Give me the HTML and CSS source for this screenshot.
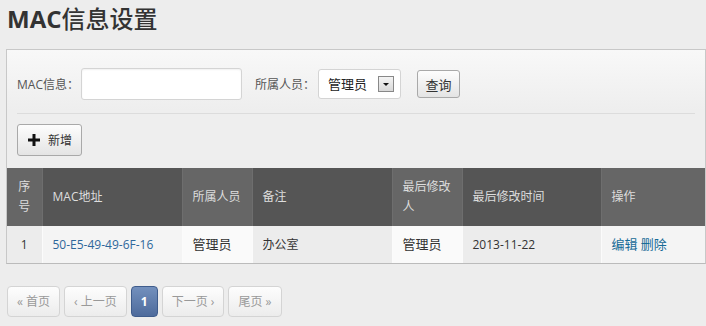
FILE: index.html
```html
<!DOCTYPE html>
<html lang="zh-CN">
<head>
  <meta charset="UTF-8" />
  <title>MAC信息设置</title>
  <link rel="stylesheet" href="styles.css">
</head>
<body>
  <h1>MAC<span class="title-cn">信息设置</span></h1>

  <div class="panel">
    <div class="filter-row">
      <label>MAC信息：</label>
      <input type="text" class="text-input" />
      <label class="gap-left">所属人员：</label>
      <div class="select">
        <span>管理员</span>
        <span class="select-arrow"><i></i></span>
      </div>
      <button class="btn btn-query">查询</button>
    </div>
    <div class="divider"></div>
    <div class="action-row">
      <button class="btn btn-add">
        <svg width="12" height="12" viewBox="0 0 12 12"><path d="M4.5 0h3v4.5H12v3H7.5V12h-3V7.5H0v-3h4.5z" fill="#111"/></svg>
        新增
      </button>
    </div>

    <table class="grid">
      <colgroup>
        <col style="width: 35px">
        <col style="width: 140px">
        <col style="width: 70px">
        <col style="width: 140px">
        <col style="width: 70px">
        <col style="width: 139px">
        <col>
      </colgroup>
      <thead>
        <tr>
          <th class="hl">序号</th>
          <th>MAC地址</th>
          <th class="hl">所属人员</th>
          <th>备注</th>
          <th class="hl">最后修改人</th>
          <th>最后修改时间</th>
          <th class="hl">操作</th>
        </tr>
      </thead>
      <tbody>
        <tr>
          <td class="center dim">1</td>
          <td class="soft"><a href="#" class="mac">50-E5-49-49-6F-16</a></td>
          <td class="bright">管理员</td>
          <td class="dim">办公室</td>
          <td class="bright">管理员</td>
          <td class="dim">2013-11-22</td>
          <td class="soft"><a href="#" class="op">编辑</a> <a href="#" class="op">删除</a></td>
        </tr>
      </tbody>
    </table>
  </div>

  <div class="pager">
    <a href="#" class="page">« 首页</a>
    <a href="#" class="page">‹ 上一页</a>
    <a href="#" class="page current">1</a>
    <a href="#" class="page">下一页 ›</a>
    <a href="#" class="page">尾页 »</a>
  </div>
</body>
</html>
```

FILE: styles.css
```css
body {
  margin: 0;
  background-color: #ededed;
  font-family: "Open Sans", "Noto Sans CJK SC", sans-serif;
  font-size: 12px;
  color: #333;
}
h1 {
  margin: 4px 0 0 7px;
  height: 45px;
  line-height: 30px;
  font-size: 24px;
  font-weight: bold;
  color: #333;
}
.title-cn {
  font-weight: 500;
}
.panel {
  margin-left: 6px;
  border: 1px solid #c8c8c8;
  border-bottom-color: #bbb;
  background: linear-gradient(#f8f8f8, #eeeeee 60px, #eeeeee);
}
.filter-row {
  display: flex;
  align-items: center;
  padding: 18px 10px 0;
  height: 32px;
}
.filter-row label {
  color: #555;
  margin-right: 2px;
}
.filter-row .gap-left {
  margin-left: 13px;
  margin-right: 3px;
}
.text-input {
  box-sizing: border-box;
  width: 161px;
  height: 32px;
  padding: 0 6px;
  border: 1px solid #d4d4d4;
  border-radius: 3px;
  background: #fff;
  box-shadow: inset 0 1px 2px rgba(0,0,0,0.06);
}
.select {
  position: relative;
  width: 83px;
  height: 30px;
  box-sizing: border-box;
  border: 1px solid #d4d4d4;
  border-radius: 3px;
  background: #fff;
  padding-left: 9px;
  line-height: 28px;
  font-size: 13px;
  color: #222;
}
.select-arrow {
  position: absolute;
  right: 6px;
  top: 6px;
  width: 14px;
  height: 14px;
  border: 1px solid #888;
  background: linear-gradient(#f4f4f4, #d8d8d8);
}
.select-arrow i {
  position: absolute;
  left: 4px;
  top: 6px;
  border-left: 3px solid transparent;
  border-right: 3px solid transparent;
  border-top: 3px solid #111;
}
.btn {
  font-family: "Open Sans", "Noto Sans CJK SC", sans-serif;
  font-size: 13px;
  color: #333;
  border: 1px solid #a9a9a9;
  border-radius: 3px;
  background: linear-gradient(#fdfdfd, #e4e4e4);
  cursor: pointer;
  padding: 0;
}
.btn-query {
  margin-left: 16px;
  width: 43px;
  height: 28px;
}
.divider {
  margin: 13px 10px 0;
  border-top: 1px solid #dcdcdc;
}
.action-row {
  padding: 10px 10px 12px;
}
.btn-add {
  display: flex;
  align-items: center;
  gap: 8px;
  width: 65px;
  height: 32px;
  padding-left: 10px;
  font-size: 12px;
}
.grid {
  width: 100%;
  border-collapse: collapse;
  table-layout: fixed;
}
.grid th {
  background-color: #555;
  color: #ddd;
  font-weight: normal;
  text-align: left;
  padding: 9px 10px;
  line-height: 20px;
  border-left: 1px solid #6e6e6e;
}
.grid th:first-child {
  border-left: none;
  text-align: center;
  padding: 9px 8px;
}
.grid th.hl {
  background-color: #666;
}
.grid td {
  padding: 9px 10px;
  line-height: 19px;
  border-left: 1px solid #fbfbfb;
  background-color: #f4f4f4;
}
.grid td:first-child {
  border-left: none;
}
.grid td.dim {
  background-color: #ececec;
}
.grid td.bright {
  background-color: #fafafa;
  font-size: 13px;
  color: #333;
}
.grid .center {
  text-align: center;
}
a {
  text-decoration: none;
}
.mac {
  color: #2f679b;
}
.op {
  color: #176b97;
  font-size: 13px;
}
.pager {
  display: flex;
  gap: 4px;
  margin: 22px 0 0 7px;
}
.page {
  display: block;
  height: 29px;
  line-height: 29px;
  padding: 0 9px;
  border: 1px solid #d4d4d4;
  border-radius: 4px;
  background: linear-gradient(#fdfdfd, #ececec);
  color: #999;
  font-size: 12px;
}
.page.current {
  padding: 0 9px;
  background: linear-gradient(#7390bd, #4e6b9c);
  border-color: #3f5c8c;
  color: #fff;
  font-weight: bold;
}
```
